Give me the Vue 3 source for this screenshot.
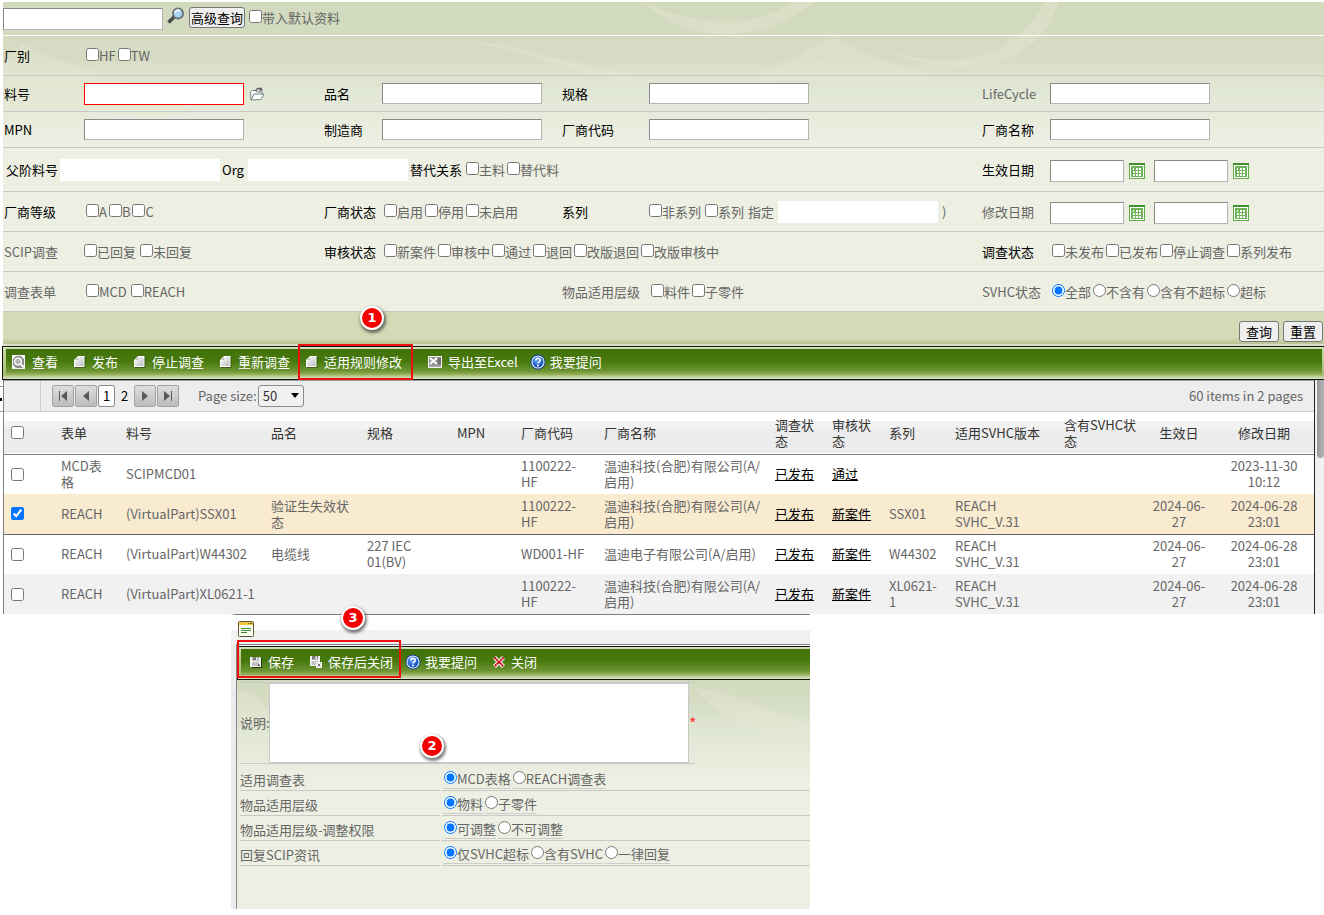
<script setup>
import { ref } from 'vue'

const headers = ['表单', '料号', '品名', '规格', 'MPN', '厂商代码', '厂商名称', '调查状\n态', '审核状\n态', '系列', '适用SVHC版本', '含有SVHC状\n态', '生效日', '修改日期']
const widths = [50, 65, 145, 96, 90, 64, 83, 171, 57, 57, 66, 109, 87, 70, 100]

const company = '温迪科技(合肥)有限公司(A/\n启用)'
const rows = ref([
  { checked: false, cells: ['MCD表\n格', 'SCIPMCD01', '', '', '', '1100222-\nHF', company, '已发布', '通过', '', '', '', '', '2023-11-30\n10:12'] },
  { checked: true, cells: ['REACH', '(VirtualPart)SSX01', '验证生失效状\n态', '', '', '1100222-\nHF', company, '已发布', '新案件', 'SSX01', 'REACH\nSVHC_V.31', '', '2024-06-\n27', '2024-06-28\n23:01'] },
  { checked: false, cells: ['REACH', '(VirtualPart)W44302', '电缆线', '227 IEC\n01(BV)', '', 'WD001-HF', '温迪电子有限公司(A/启用)', '已发布', '新案件', 'W44302', 'REACH\nSVHC_V.31', '', '2024-06-\n27', '2024-06-28\n23:01'] },
  { checked: false, cells: ['REACH', '(VirtualPart)XL0621-1', '', '', '', '1100222-\nHF', company, '已发布', '新案件', 'XL0621-\n1', 'REACH\nSVHC_V.31', '', '2024-06-\n27', '2024-06-28\n23:01'] },
])

const vendorStates = ['启用', '停用', '未启用']
const reviewStates = ['新案件', '审核中', '通过', '退回', '改版退回', '改版审核中']
const surveyStates = ['未发布', '已发布', '停止调查', '系列发布']
const svhcStates = ['全部', '不含有', '含有不超标', '超标']
const svhc = ref('全部')

const options = ref([
  { name: 'form', label: '适用调查表', value: 'MCD表格', choices: ['MCD表格', 'REACH调查表'] },
  { name: 'level', label: '物品适用层级', value: '物料', choices: ['物料', '子零件'] },
  { name: 'adjust', label: '物品适用层级-调整权限', value: '可调整', choices: ['可调整', '不可调整'] },
  { name: 'reply', label: '回复SCIP资讯', value: '仅SVHC超标', choices: ['仅SVHC超标', '含有SVHC', '一律回复'] },
])
</script>

<template>
  <svg class="defs" aria-hidden="true">
    <defs>
      <linearGradient id="g-page" x1="0" y1="0" x2="1" y2="1">
        <stop offset="0" stop-color="#ffffff" />
        <stop offset="1" stop-color="#bdbdbd" />
      </linearGradient>
      <radialGradient id="g-help" cx="0.4" cy="0.3" r="0.8">
        <stop offset="0" stop-color="#5aa2ff" />
        <stop offset="1" stop-color="#0b3fae" />
      </radialGradient>
    </defs>
    <symbol id="i-view" viewBox="0 0 14 14">
      <rect x="0" y="0" width="13" height="14" fill="#f4f4f4" />
      <rect x="1" y="1" width="11" height="12" fill="#8d8d8d" />
      <path d="M1 1h3L1 4zM12 1v3L9 1zM1 13v-3l3 3z" fill="#fff" />
      <circle cx="6" cy="6.5" r="3.4" fill="#b5b5b5" stroke="#fff" stroke-width="1.4" />
      <path d="M9 9.5l3 3" stroke="#fff" stroke-width="2" />
    </symbol>
    <symbol id="i-page" viewBox="0 0 12 14">
      <path d="M4 2h7.500v11H1V6z" fill="#1f3a08" opacity="0.55" />
      <path d="M4 1h6.500v11H0V5z" fill="#fff" />
      <path d="M5 2h4.500v9H1V6z" fill="url(#g-page)" />
      <path d="M4 2v3H1z" fill="#b9c2ae" />
    </symbol>
    <symbol id="i-excel" viewBox="0 0 14 14">
      <rect x="0" y="1" width="14" height="12" fill="#f4f4f4" />
      <rect x="1" y="2" width="12" height="8" fill="#8b8b8b" />
      <path d="M2 3l7 6M9 3L2 9" stroke="#fff" stroke-width="2" />
      <path d="M10 4h3M10 6h3M10 8h3M1 11h12" stroke="#555" stroke-width="1" />
    </symbol>
    <symbol id="i-help" viewBox="0 0 16 16">
      <circle cx="8" cy="8" r="7.500" fill="#0c3b86" />
      <circle cx="8" cy="8" r="6.600" fill="#e6f1ff" />
      <circle cx="8" cy="8" r="5.500" fill="url(#g-help)" />
      <path d="M5.800 6.500C5.800 3.700 10.300 3.800 10.200 6.400C10.100 7.900 8 7.900 8 9.500" fill="none" stroke="#fff" stroke-width="1.700" />
      <circle cx="8" cy="11.500" r="1" fill="#fff" />
    </symbol>
    <symbol id="i-save" viewBox="0 0 12 12">
      <path d="M1 2h11v10H2z" fill="#1f3a08" />
      <path d="M0 1h10l1 1v9H0z" fill="#f3f3f3" />
      <rect x="2.500" y="1" width="6" height="3.500" fill="#7b7b7b" />
      <rect x="6" y="1.500" width="1.500" height="2.500" fill="#fff" />
      <rect x="2" y="6" width="7" height="4" fill="#c4c4c4" />
      <rect x="8" y="8.500" width="1.500" height="1.500" fill="#222" />
    </symbol>
    <symbol id="i-saveclose" viewBox="0 0 12 12">
      <path d="M0 0h10v10H0z" fill="#f3f3f3" />
      <rect x="2" y="0" width="6" height="3.500" fill="#7b7b7b" />
      <rect x="5.500" y="0.500" width="1.500" height="2.500" fill="#fff" />
      <rect x="1.500" y="5" width="7" height="4" fill="#c4c4c4" />
      <rect x="6" y="6" width="6" height="6" fill="#f8f8f8" />
      <path d="M7.500 7.500l3 3M10.500 7.500l-3 3" stroke="#777" stroke-width="1" />
    </symbol>
    <symbol id="i-close" viewBox="0 0 12 12">
      <path d="M1.500 1.500l9 9M10.500 1.500l-9 9" stroke="#fff" stroke-width="4" />
      <path d="M1.500 1.500l9 9M10.500 1.500l-9 9" stroke="#c1121c" stroke-width="2.200" stroke-dasharray="2 0.500" />
    </symbol>
    <symbol id="i-calendar" viewBox="0 0 16 16">
      <rect x="0.500" y="1.500" width="15" height="14" fill="#fff" stroke="#63ad4c" />
      <rect x="0" y="0" width="16" height="2" fill="#3f9130" />
      <rect x="2" y="3" width="12" height="11" fill="#6fb35b" />
      <path d="M4 5h1v2h-1zM7 5h2v2H7zM10 5h2v2h-2zM4 8h2v2H4zM7 8h2v2H7zM10 8h2v2h-2zM4 11h2v2H4zM7 11h2v2H7zM10 11h2v2h-2z" fill="#fff" />
    </symbol>
  </svg>

  <section class="search">
    <svg class="swirl" viewBox="0 0 1321 150" preserveAspectRatio="none" aria-hidden="true">
      <path d="M640 0C690 46 760 40 812 0h-22C750 26 700 26 640 0z" />
      <path d="M462 40C520 46 560 70 620 78C700 98 790 92 838 38C820 30 800 60 740 76C660 86 560 60 500 42z" />
      <path d="M880 48C950 76 1030 76 1056 0h-14C1010 60 950 68 880 48z" />
      <path d="M838 38C880 60 910 74 980 78H760C800 70 820 60 838 38z" />
      <path d="M20 42C70 70 130 74 190 110C120 120 60 100 0 106V60z" />
    </svg>

    <div class="quick">
      <input id="quick" class="box" type="text" aria-label="快速查询" />
      <button class="icon" aria-label="搜索">
        <svg width="18" height="18" viewBox="0 0 18 18">
          <path d="M7 10L1.500 15.500" stroke="#4a4a4a" stroke-width="3.500" />
          <circle cx="11" cy="6.500" r="5" fill="#a9d3f5" stroke="#6b7079" stroke-width="2" />
          <path d="M8 6a3 3 0 0 1 5-2" fill="none" stroke="#f2f9ff" stroke-width="2" />
        </svg>
      </button>
      <button class="btn">高级查询</button>
      <label class="tick"><input type="checkbox" />带入默认资料</label>
    </div>

    <div class="row">
      <span class="cap">厂别</span>
      <div class="checks">
        <label class="tick"><input type="checkbox" />HF</label>
        <label class="tick"><input type="checkbox" />TW</label>
      </div>
    </div>

    <div class="row short">
      <label class="cap" for="part">料号</label>
      <div class="field">
        <input id="part" class="box required" type="text" />
        <button class="icon" aria-label="选择料号">
          <svg width="16" height="16" viewBox="0 0 16 16">
            <path d="M2 14L1.500 6l2-1.500h3L8 6h5v2" fill="#fff" stroke="#73807e" />
            <path d="M2 14l3-6h10l-3 5.500z" fill="#fdfdfd" stroke="#73807e" />
            <path d="M6 5c1-3 3-4 5-3l1-1 2 3.500-4 .500 1-1.500c-2-.500-3 0-4 2z" fill="#64596f" />
          </svg>
        </button>
      </div>
      <label class="cap" for="name">品名</label>
      <div class="field"><input id="name" class="box" type="text" /></div>
      <label class="cap" for="spec">规格</label>
      <div class="field"><input id="spec" class="box" type="text" /></div>
      <label class="cap dim" for="life">LifeCycle</label>
      <div class="field"><input id="life" class="box" type="text" /></div>
    </div>

    <div class="row short">
      <label class="cap" for="mpn">MPN</label>
      <div class="field"><input id="mpn" class="box" type="text" /></div>
      <label class="cap" for="maker">制造商</label>
      <div class="field"><input id="maker" class="box" type="text" /></div>
      <label class="cap" for="vcode">厂商代码</label>
      <div class="field"><input id="vcode" class="box" type="text" /></div>
      <label class="cap" for="vname">厂商名称</label>
      <div class="field"><input id="vname" class="box" type="text" /></div>
    </div>

    <div class="row tall">
      <div class="parent">
        <label class="cap" for="parent">父阶料号</label>
        <input id="parent" class="box plain" type="text" />
        <label class="cap org" for="org">Org</label>
        <input id="org" class="box plain" type="text" />
        <span class="cap">替代关系</span>
        <div class="checks">
          <label class="tick"><input type="checkbox" />主料</label>
          <label class="tick"><input type="checkbox" />替代料</label>
        </div>
      </div>
      <label class="cap" for="eff1">生效日期</label>
      <div class="field dates">
        <input id="eff1" class="box date" type="text" />
        <button class="icon" aria-label="选择生效开始日期"><svg width="16" height="16"><use href="#i-calendar" /></svg></button>
        <input class="box date" type="text" aria-label="生效结束日期" />
        <button class="icon" aria-label="选择生效结束日期"><svg width="16" height="16"><use href="#i-calendar" /></svg></button>
      </div>
    </div>

    <div class="row">
      <span class="cap">厂商等级</span>
      <div class="checks">
        <label v-for="g in ['A', 'B', 'C']" :key="g" class="tick"><input type="checkbox" />{{ g }}</label>
      </div>
      <span class="cap">厂商状态</span>
      <div class="checks">
        <label v-for="s in vendorStates" :key="s" class="tick"><input type="checkbox" />{{ s }}</label>
      </div>
      <span class="cap">系列</span>
      <div class="checks wide">
        <label class="tick"><input type="checkbox" />非系列</label>
        <label class="tick"><input type="checkbox" />系列</label>
        <label for="series">指定</label>
        <input id="series" class="box plain" type="text" />
        <span>)</span>
      </div>
      <label class="cap dim" for="mod1">修改日期</label>
      <div class="field dates">
        <input id="mod1" class="box date" type="text" />
        <button class="icon" aria-label="选择修改开始日期"><svg width="16" height="16"><use href="#i-calendar" /></svg></button>
        <input class="box date" type="text" aria-label="修改结束日期" />
        <button class="icon" aria-label="选择修改结束日期"><svg width="16" height="16"><use href="#i-calendar" /></svg></button>
      </div>
    </div>

    <div class="row">
      <span class="cap dim">SCIP调查</span>
      <div class="checks wide">
        <label class="tick"><input type="checkbox" />已回复</label>
        <label class="tick"><input type="checkbox" />未回复</label>
      </div>
      <span class="cap">审核状态</span>
      <div class="checks span">
        <label v-for="s in reviewStates" :key="s" class="tick"><input type="checkbox" />{{ s }}</label>
      </div>
      <span class="cap">调查状态</span>
      <div class="checks">
        <label v-for="s in surveyStates" :key="s" class="tick"><input type="checkbox" />{{ s }}</label>
      </div>
    </div>

    <div class="row">
      <span class="cap dim">调查表单</span>
      <div class="checks span pair">
        <label class="tick"><input type="checkbox" />MCD</label>
        <label class="tick"><input type="checkbox" />REACH</label>
      </div>
      <span class="cap dim">物品适用层级</span>
      <div class="checks">
        <label class="tick"><input type="checkbox" />料件</label>
        <label class="tick"><input type="checkbox" />子零件</label>
      </div>
      <span class="cap dim">SVHC状态</span>
      <div class="checks">
        <label v-for="s in svhcStates" :key="s" class="tick"><input v-model="svhc" type="radio" name="svhc" :value="s" />{{ s }}</label>
      </div>
    </div>

    <div class="actions">
      <button class="btn">查询</button>
      <button class="btn">重置</button>
    </div>
  </section>

  <nav class="bar main-bar">
    <div class="green">
      <button class="tool"><svg width="14" height="14"><use href="#i-view" /></svg>查看</button>
      <button class="tool"><svg width="12" height="14"><use href="#i-page" /></svg>发布</button>
      <button class="tool"><svg width="12" height="14"><use href="#i-page" /></svg>停止调查</button>
      <button class="tool"><svg width="12" height="14"><use href="#i-page" /></svg>重新调查</button>
      <div class="marked">
        <button class="tool"><svg width="12" height="14"><use href="#i-page" /></svg>适用规则修改</button>
        <span class="frame"></span>
        <span class="badge one">1</span>
      </div>
      <button class="tool export"><svg width="14" height="14"><use href="#i-excel" /></svg>导出至Excel</button>
      <button class="tool help"><svg width="16" height="16"><use href="#i-help" /></svg>我要提问</button>
    </div>
  </nav>

  <section class="listing">
    <div class="gutter"><i></i></div>
    <div class="grid">
      <div class="pager">
        <div class="nav">
          <button class="pg" aria-label="第一页"><svg width="10" height="10"><path d="M1 0h1v10H1zM9 0v10L3 5z" /></svg></button>
          <button class="pg" aria-label="上一页"><svg width="10" height="10"><path d="M8 0v10L2 5z" /></svg></button>
          <button class="num current">1</button>
          <button class="num">2</button>
          <button class="pg" aria-label="下一页"><svg width="10" height="10"><path d="M2 0v10l6-5z" /></svg></button>
          <button class="pg" aria-label="最后一页"><svg width="10" height="10"><path d="M8 0h1v10H8zM1 0v10l6-5z" /></svg></button>
        </div>
        <label for="size">Page size:</label>
        <div class="picker">
          <select id="size"><option>50</option></select>
          <svg width="8" height="5" aria-hidden="true"><path d="M0 0h8L4 5z" /></svg>
        </div>
        <span class="total">60 items in 2 pages</span>
      </div>
      <table>
        <colgroup><col v-for="(w, i) in widths" :key="i" :style="{ width: w + 'px' }" /></colgroup>
        <thead>
          <tr>
            <th><input type="checkbox" aria-label="全选" /></th>
            <th v-for="(h, i) in headers" :key="i" :class="{ mid: i > 11 }">{{ h }}</th>
          </tr>
        </thead>
        <tbody>
          <tr v-for="(r, n) in rows" :key="n" :class="{ picked: r.checked, alt: n === 3 }">
            <td><input v-model="r.checked" type="checkbox" :aria-label="'选择 ' + r.cells[1]" /></td>
            <td v-for="(c, i) in r.cells" :key="i" :class="{ mid: i > 11 }">
              <a v-if="i === 7 || i === 8" href="#">{{ c }}</a>
              <template v-else>{{ c }}</template>
            </td>
          </tr>
        </tbody>
      </table>
    </div>
    <div class="scroll"><i></i></div>
  </section>

  <section class="dialog">
    <div class="title">
      <svg width="16" height="16" viewBox="0 0 16 16" aria-hidden="true">
        <rect x="0.500" y="0.500" width="15" height="15" rx="1" fill="#fffef2" stroke="#5c5636" />
        <rect x="1" y="1" width="14" height="3" fill="#f2c744" />
        <path d="M10 2.500h1M12 2.500h2" stroke="#6b5310" />
        <path d="M3 7.500h10M3 9.500h10M3 11.500h6" stroke="#3b8a2d" />
      </svg>
    </div>
    <div class="inner">
      <nav class="bar">
        <div class="green">
          <div class="marked save">
            <button class="tool"><svg width="12" height="12"><use href="#i-save" /></svg>保存</button>
            <button class="tool"><svg width="12" height="12"><use href="#i-saveclose" /></svg>保存后关闭</button>
            <span class="frame"></span>
            <span class="badge three">3</span>
          </div>
          <button class="tool help"><svg width="16" height="16"><use href="#i-help" /></svg>我要提问</button>
          <button class="tool"><svg width="12" height="12"><use href="#i-close" /></svg>关闭</button>
        </div>
      </nav>
      <div class="form">
        <svg class="swirl small" viewBox="0 0 570 90" preserveAspectRatio="none" aria-hidden="true">
          <path d="M455 8C490 10 530 30 573 48V70C530 40 500 60 455 8z" />
          <path d="M0 10C20 12 30 26 32 40H0z" />
        </svg>
        <div class="note">
          <label for="note">说明:</label>
          <textarea id="note"></textarea>
          <span class="star">*</span>
          <span class="badge two">2</span>
        </div>
        <div v-for="o in options" :key="o.name" class="opt" role="radiogroup" :aria-label="o.label">
          <span class="opt-name">{{ o.label }}</span>
          <div class="opt-values">
            <label v-for="c in o.choices" :key="c"><input v-model="o.value" type="radio" :name="o.name" :value="c" /><span>{{ c }}</span></label>
          </div>
        </div>
      </div>
    </div>
  </section>
</template>

<style>
body {
  background: #fff;
}
#app {
  font: 13px/16px "Noto Sans CJK SC", "Noto Sans", sans-serif;
  color: #666;
  padding-top: 2px;
}
</style>

<style scoped>
* {
  box-sizing: border-box;
}
.defs {
  position: absolute;
  width: 0;
  height: 0;
}
input,
button,
select,
textarea {
  font: inherit;
  margin: 0;
}
button {
  cursor: pointer;
  white-space: nowrap;
}
svg {
  display: block;
  flex: none;
}
input[type="checkbox"],
input[type="radio"] {
  width: 13px;
  height: 13px;
  flex: none;
}
.search {
  position: relative;
  margin-left: 3px;
  background: linear-gradient(#d1d9bd 0, #d5dcc3 55px, #dfe3ce 75px, #e0e6d4 85px, #edefe2 140px);
}
.swirl {
  position: absolute;
  left: 0;
  top: 0;
  width: 100%;
  height: 150px;
  fill: #ebe8d4;
  opacity: 0.4;
}
.quick {
  position: relative;
  display: flex;
  align-items: center;
  height: 34px;
  border-bottom: 1px solid #fff;
}
.quick .icon {
  margin: 0 4px;
}
.quick .btn {
  margin-right: 4px;
  padding: 0 1px;
}
.quick .btn,
.quick .icon {
  align-self: flex-start;
  margin-top: 5px;
}
.quick .tick {
  margin-bottom: 2px;
}
.box {
  width: 160px;
  height: 22px;
  padding: 1px 2px;
  border: 1px solid;
  border-color: #8a8a8a #b4b4b4 #b4b4b4 #8a8a8a;
  background: #fff;
  flex: none;
}
.short .box {
  height: 21px;
}
.short .box.required {
  height: 22px;
  border-color: #f00;
}
.box.plain {
  border-color: #fff;
}
.box.date {
  width: 74px;
}
.icon {
  padding: 0;
  border: 0;
  background: none;
}
.btn {
  height: 21px;
  padding: 0 6px;
  border: 1px solid #767676;
  border-radius: 3px;
  background: #efefef;
  color: #000;
  line-height: 18px;
}
.row {
  position: relative;
  display: grid;
  grid-template-columns: 80px 240fr 58px 180fr 87px 333fr 68px 274fr;
  align-items: center;
  height: 40px;
  padding-left: 1px;
  border-bottom: 1px solid #c8c9c6;
  white-space: nowrap;
}
.row > * {
  min-width: 0;
}
.short {
  height: 36px;
}
.tall {
  height: 44px;
}
.cap {
  color: #000;
}
.cap.dim {
  color: #666;
}
.cap.org {
  width: 24px;
}
.field,
.checks,
.parent,
.tick {
  display: flex;
  align-items: center;
}
.field {
  gap: 5px;
}
.dates {
  padding-top: 2px;
}
.dates .icon:nth-of-type(1) {
  margin-right: 4px;
}
.checks {
  gap: 2px;
  padding-left: 2px;
}
.checks.wide {
  gap: 4px;
  padding-left: 0;
}
.checks.span {
  grid-column: span 3;
}
.checks.pair {
  gap: 4px;
}
.tick input {
  margin-bottom: 2px;
}
.parent {
  grid-column: span 6;
  gap: 2px;
  padding-left: 2px;
}
.actions {
  display: flex;
  justify-content: flex-end;
  gap: 4px;
  height: 34px;
  padding: 9px 1px 0 0;
  background: linear-gradient(#d3dab6 0, #d3dab6 26px, #b9c292 32px, #dbe1c6 32px);
}
.bar {
  padding: 2px 2px 4px 3px;
  border: 1px solid #10180a;
  border-right: 0;
  background: linear-gradient(#dbe3cd, #c5d3a4 3px, #a6bd72 28px, #dde4cd);
}
.main-bar {
  margin: 0 0 0 2px;
}
.green {
  display: flex;
  align-items: center;
  gap: 16px;
  height: 26px;
  padding-left: 6px;
  background: linear-gradient(#41720a 0, #47790d 12px, #6d9433 22px, #9bb65f 26px);
}
.tool {
  display: flex;
  align-items: center;
  gap: 6px;
  height: 24px;
  padding: 0;
  border: 0;
  background: none;
  color: #fff;
}
.tool.export {
  margin-left: 10px;
}
.tool.help {
  gap: 4px;
  margin-left: -4px;
}
.marked {
  position: relative;
  display: flex;
  gap: 16px;
  z-index: 2;
}
.frame {
  position: absolute;
  inset: -6px -11px -6px -8px;
  border: 2px solid #ee1010;
  pointer-events: none;
}
.inner .green {
  padding-left: 9px;
}
.save .frame {
  inset: -10px -8px -4px -13px;
}
.badge {
  position: absolute;
  display: grid;
  place-items: center;
  width: 24px;
  height: 24px;
  border: 2px solid #fff;
  border-radius: 50%;
  background: #f40000;
  box-shadow: 1px 2px 3px 1px rgba(0, 0, 0, 0.5);
  color: #fff;
  font: 13px/16px "DejaVu Sans", sans-serif;
  -webkit-text-stroke: 0;
}
.one {
  left: 54px;
  top: -44px;
  font-weight: bold;
}
.three {
  left: 91px;
  top: -44px;
  font-weight: bold;
}
.two {
  left: 180px;
  top: 51px;
  font-weight: bold;
}
.listing {
  display: flex;
}
.gutter {
  width: 3px;
  padding-top: 6px;
  flex: none;
}
.gutter i {
  display: block;
  height: 26px;
  border-top: 1px solid #999;
  border-bottom: 1px solid #999;
  background: linear-gradient(#000, #000) 0 11px / 2px 3px no-repeat;
}
.grid {
  flex: 1;
  min-width: 0;
  border-left: 1px solid #808080;
  border-right: 1px solid #222;
}
.pager {
  display: flex;
  align-items: center;
  height: 32px;
  padding-right: 11px;
  border-top: 1px solid #9a9a9a;
  border-bottom: 1px solid #ccc;
  background: #ededed;
}
.nav {
  display: flex;
  align-items: center;
  align-self: stretch;
  gap: 1px;
  margin: 0 19px 0 36px;
  padding-left: 11px;
  border-left: 1px solid #ccc;
}
.pg,
.num {
  display: grid;
  place-items: center;
  height: 22px;
  padding: 0;
}
.pg {
  width: 22px;
  border: 1px solid #a3a3a3;
  border-radius: 2px;
  background: linear-gradient(#dedede, #bcbcbc);
  fill: #5a5a5a;
}
.num {
  width: 17px;
  border: 0;
  background: none;
  color: #000;
}
.num.current {
  border: 1px solid #8a8a8a;
  border-radius: 2px;
  background: #fff;
}
.picker {
  position: relative;
  margin-left: 1px;
}
.picker svg {
  position: absolute;
  right: 5px;
  top: 8px;
  pointer-events: none;
}
select {
  display: block;
  appearance: none;
  width: 46px;
  height: 22px;
  padding: 0 4px;
  border: 1px solid #8c8c8c;
  border-radius: 3px;
  background: #f1f1f1;
  color: #333;
}
.total {
  margin-left: auto;
}
table {
  width: 100%;
  table-layout: fixed;
  border-collapse: collapse;
}
th,
td {
  height: 40px;
  padding: 0 0 0 7px;
  font-weight: normal;
  text-align: left;
  vertical-align: middle;
  white-space: pre-line;
}
th {
  height: 42px;
  color: #333;
}
th input,
td input {
  display: block;
}
thead tr {
  border-bottom: 1px solid #808080;
  background: linear-gradient(#fff 9px, #f2f2f2 9px, #f2f2f2 17px, #ececec 17px);
}
.mid {
  padding: 0;
  text-align: center;
}
.picked {
  border-bottom: 1px solid #666;
  background: #f9ebd0;
}
.alt {
  background: #f1f1f1;
}
a {
  color: #000;
  text-decoration: underline;
}
.scroll {
  width: 9px;
  padding-left: 2px;
  background: #f1f1f1;
  flex: none;
}
.scroll i {
  display: block;
  height: 78px;
  border-radius: 0 0 4px 4px;
  background: linear-gradient(90deg, #999, #b4b4b4);
}
.dialog {
  margin: 0 514px 0 231px;
  border-top: 1px solid #808080;
  border-left: 5px solid #ececec;
}
.title {
  height: 29px;
  padding-top: 6px;
  margin-left: -5px;
  padding-left: 7px;
  background: linear-gradient(#fff 15px, #f1f1f1 15px);
}
.inner {
  border-left: 1px solid #85858c;
  border-top: 1px solid #85858c;
}
.inner .bar {
  margin-top: 1px;
  padding-right: 0;
}
.form {
  position: relative;
  padding: 2px 0 43px 3px;
  background: linear-gradient(#d1d9bd 0, #d5dcc3 20px, #e0e6d4 50px, #edefe2 100px);
}
.swirl.small {
  height: 90px;
}
.note {
  position: relative;
  display: flex;
  align-items: center;
  width: 455px;
  margin-bottom: 2px;
  border-bottom: 1px solid #c8c9c6;
  border-top: 1px solid #c8c9c6;
}
.note label {
  width: 29px;
  white-space: nowrap;
}
textarea {
  flex: 1;
  display: block;
  height: 80px;
  border: 1px solid #c8c8c8;
  border-radius: 0;
  background: #fff;
  resize: none;
}
.star {
  width: 6px;
  color: #f33;
  font-size: 16px;
}
.opt {
  position: relative;
  display: grid;
  grid-template-columns: 200px 1fr;
  gap: 2px;
  height: 25px;
}
.opt-name,
.opt-values {
  border-bottom: 1px solid #c8c9c6;
}
.opt-name {
  padding-top: 6px;
}
.opt-values {
  display: flex;
  align-items: flex-start;
  gap: 2px;
  padding: 5px 0 0 2px;
}
.opt-values label {
  display: flex;
  height: 18px;
  border-bottom: 1px solid #ccc;
}
</style>
